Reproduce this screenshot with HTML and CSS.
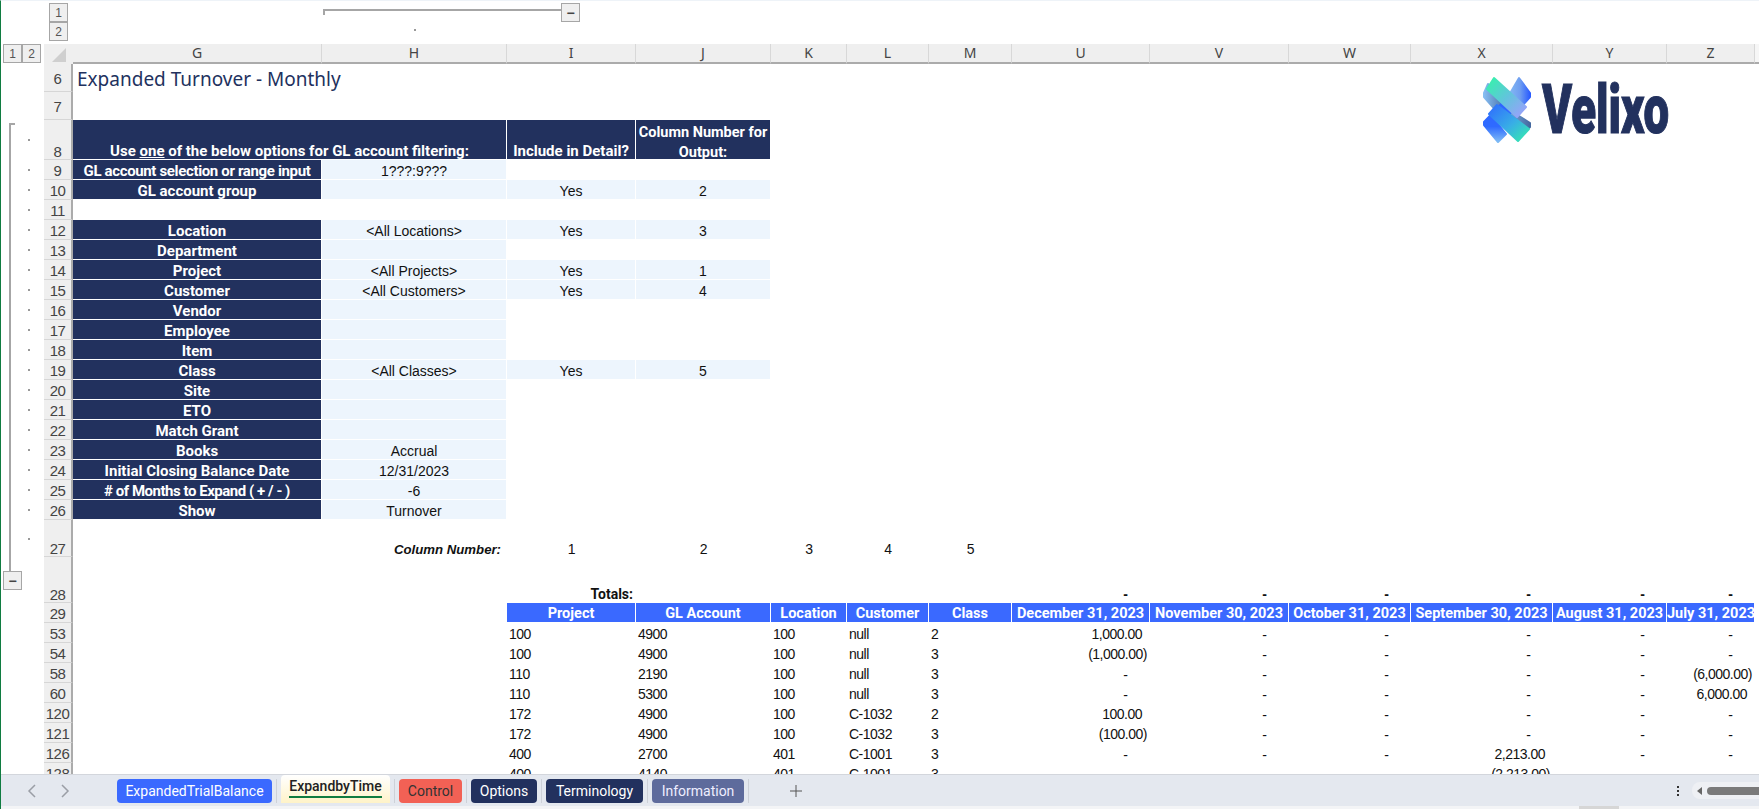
FILE: index.html
```html
<!DOCTYPE html>
<html lang="en">
<head>
<meta charset="utf-8">
<title>Expanded Turnover - Monthly</title>
<link rel="stylesheet" href="styles.css">
</head>
<body>
<div class="app">
  <main class="sheet">
    <div class="logo">
      <svg class="logo-mark" viewBox="0 0 48 67" width="48" height="67" aria-hidden="true">
        <defs>
          <linearGradient id="lg-a" x1="0" y1="0" x2="1" y2="1"><stop offset="0" stop-color="#33f5a8"/><stop offset=".5" stop-color="#62c4dc"/><stop offset="1" stop-color="#a09cff"/></linearGradient>
          <linearGradient id="lg-b" x1="0" y1="0" x2="1" y2="1"><stop offset="0" stop-color="#2f6bff"/><stop offset=".55" stop-color="#38aee6"/><stop offset="1" stop-color="#35eeaa"/></linearGradient>
          <linearGradient id="lg-c" x1="0" y1="0" x2="1" y2="0"><stop offset="0" stop-color="#8cc4f5"/><stop offset=".6" stop-color="#6f9ef0"/><stop offset="1" stop-color="#2a5cff"/></linearGradient>
          <linearGradient id="lg-d" x1="0" y1="0" x2="1" y2="0"><stop offset="0" stop-color="#86bdf2"/><stop offset="1" stop-color="#44689f"/></linearGradient>
          <linearGradient id="lg-e" x1="0" y1="0" x2="0" y2="1"><stop offset="0" stop-color="#2f63ff"/><stop offset=".65" stop-color="#2f6bff"/><stop offset="1" stop-color="#7fbcf5"/></linearGradient>
        </defs>
        <path d="M36 2 L47 17 L47 21 L32 38 L22 26 Z" fill="url(#lg-c)" stroke="url(#lg-c)" stroke-width="2" stroke-linejoin="round"/>
        <path d="M5 8 L1 17 L1 21 L16 38 L24 30 Z" fill="url(#lg-d)" stroke="url(#lg-d)" stroke-width="2" stroke-linejoin="round"/>
        <path d="M28 35 L47 47 L47 51 L36 62 L20 44 Z" fill="url(#lg-d)" stroke="url(#lg-d)" stroke-width="2" stroke-linejoin="round"/>
        <path d="M1 46 L24 22 L33 32 L15 48 L23 58 L15 66 L1 49 Z" fill="url(#lg-e)" stroke="url(#lg-e)" stroke-width="2" stroke-linejoin="round"/>
        <path d="M14 29 L46 53 L35 65 L6 38 Z" fill="url(#lg-b)" stroke="url(#lg-b)" stroke-width="2" stroke-linejoin="round"/>
        <path d="M11 2 L43 31 L34 41 L4 13 Z" fill="url(#lg-a)" stroke="url(#lg-a)" stroke-width="2" stroke-linejoin="round"/>
      </svg>
      <span class="logo-word">Velixo</span>
    </div>
    <table class="grid">
      <colgroup>
        <col class="c-gutter"><col class="c-rh"><col class="c-g"><col class="c-h"><col class="c-i"><col class="c-j"><col class="c-k"><col class="c-l"><col class="c-m"><col class="c-u"><col class="c-v"><col class="c-w"><col class="c-x"><col class="c-y"><col class="c-z"><col class="c-end">
      </colgroup>
      <tr class="r-outline">
        <td colspan="2" class="levels-cell"><div class="col-levels"><button class="lvl">1</button><button class="lvl">2</button></div></td>
        <td></td>
        <td colspan="3" class="outline-cell">
          <div class="outline-top"><span class="outline-line"></span><button class="lvl minus">&minus;</button></div>
          <div class="outline-dotrow"><span class="odot"></span></div>
        </td>
        <td colspan="10"></td>
      </tr>
      <tr class="r-head">
        <td class="lv2"><div class="row-levels"><button class="lvl">1</button><button class="lvl">2</button></div></td>
        <td class="corner"><span class="tri"></span></td>
        <td class="ch">G</td><td class="ch">H</td><td class="ch">I</td><td class="ch">J</td><td class="ch">K</td><td class="ch">L</td><td class="ch">M</td><td class="ch">U</td><td class="ch">V</td><td class="ch">W</td><td class="ch">X</td><td class="ch">Y</td><td class="ch">Z</td><td class="ch-end"></td>
      </tr>
      <tr class="r28"><td></td><td class="rh">6</td><td colspan="4" class="title">Expanded Turnover - Monthly</td><td colspan="10"></td></tr>
      <tr class="r28"><td></td><td class="rh">7</td><td colspan="14"></td></tr>
      <tr class="r40"><td class="gt gt-first"></td><td class="rh bt">8</td><td colspan="2" class="nv bt">Use <u>one</u> of the below options for GL account filtering:</td><td class="nv bt">Include in Detail?</td><td class="nv bt wrap"><span class="wrap-text">Column Number for Output:</span></td><td colspan="10"></td></tr>
      <tr class="r20"><td class="gt"></td><td class="rh">9</td><td class="nv tight">GL account selection or range input</td><td class="lt">1???:9???</td><td colspan="12"></td></tr>
      <tr class="r20"><td class="gt"></td><td class="rh">10</td><td class="nv">GL account group</td><td class="lt"></td><td class="lt">Yes</td><td class="lt">2</td><td colspan="10"></td></tr>
      <tr class="r20"><td class="gt"></td><td class="rh">11</td><td colspan="14"></td></tr>
      <tr class="r20"><td class="gt"></td><td class="rh">12</td><td class="nv">Location</td><td class="lt">&lt;All Locations&gt;</td><td class="lt">Yes</td><td class="lt">3</td><td colspan="10"></td></tr>
      <tr class="r20"><td class="gt"></td><td class="rh">13</td><td class="nv">Department</td><td class="lt"></td><td colspan="12"></td></tr>
      <tr class="r20"><td class="gt"></td><td class="rh">14</td><td class="nv">Project</td><td class="lt">&lt;All Projects&gt;</td><td class="lt">Yes</td><td class="lt">1</td><td colspan="10"></td></tr>
      <tr class="r20"><td class="gt"></td><td class="rh">15</td><td class="nv">Customer</td><td class="lt">&lt;All Customers&gt;</td><td class="lt">Yes</td><td class="lt">4</td><td colspan="10"></td></tr>
      <tr class="r20"><td class="gt"></td><td class="rh">16</td><td class="nv">Vendor</td><td class="lt"></td><td colspan="12"></td></tr>
      <tr class="r20"><td class="gt"></td><td class="rh">17</td><td class="nv">Employee</td><td class="lt"></td><td colspan="12"></td></tr>
      <tr class="r20"><td class="gt"></td><td class="rh">18</td><td class="nv">Item</td><td class="lt"></td><td colspan="12"></td></tr>
      <tr class="r20"><td class="gt"></td><td class="rh">19</td><td class="nv">Class</td><td class="lt">&lt;All Classes&gt;</td><td class="lt">Yes</td><td class="lt">5</td><td colspan="10"></td></tr>
      <tr class="r20"><td class="gt"></td><td class="rh">20</td><td class="nv">Site</td><td class="lt"></td><td colspan="12"></td></tr>
      <tr class="r20"><td class="gt"></td><td class="rh">21</td><td class="nv">ETO</td><td class="lt"></td><td colspan="12"></td></tr>
      <tr class="r20"><td class="gt"></td><td class="rh">22</td><td class="nv">Match Grant</td><td class="lt"></td><td colspan="12"></td></tr>
      <tr class="r20"><td class="gt"></td><td class="rh">23</td><td class="nv">Books</td><td class="lt">Accrual</td><td colspan="12"></td></tr>
      <tr class="r20"><td class="gt"></td><td class="rh">24</td><td class="nv">Initial Closing Balance Date</td><td class="lt">12/31/2023</td><td colspan="12"></td></tr>
      <tr class="r20"><td class="gt"></td><td class="rh">25</td><td class="nv tighter"># of Months to Expand ( + / - )</td><td class="lt">-6</td><td colspan="12"></td></tr>
      <tr class="r20"><td class="gt"></td><td class="rh">26</td><td class="nv">Show</td><td class="lt">Turnover</td><td colspan="12"></td></tr>
      <tr class="r37"><td class="gt"></td><td class="rh bt">27</td><td></td><td class="colnum">Column Number:</td><td class="mid">1</td><td class="mid">2</td><td class="mid">3</td><td class="mid">4</td><td class="mid">5</td><td colspan="7"></td></tr>
      <tr class="r46"><td class="gt-last"><button class="lvl minus group-minus">&minus;</button></td><td class="rh bt">28</td><td colspan="2"></td><td class="totals">Totals:</td><td colspan="4"></td><td class="d b">-</td><td class="d b">-</td><td class="d b">-</td><td class="d b">-</td><td class="d b">-</td><td class="d b">-</td><td></td></tr>
      <tr class="r20"><td></td><td class="rh">29</td><td colspan="2"></td><td class="bl">Project</td><td class="bl">GL Account</td><td class="bl">Location</td><td class="bl">Customer</td><td class="bl">Class</td><td class="bl">December 31, 2023</td><td class="bl">November 30, 2023</td><td class="bl">October 31, 2023</td><td class="bl">September 30, 2023</td><td class="bl">August 31, 2023</td><td class="bl">July 31, 2023</td><td></td></tr>
      <tr class="r20"><td></td><td class="rh">53</td><td colspan="2"></td><td class="t">100</td><td class="t">4900</td><td class="t">100</td><td class="t">null</td><td class="t">2</td><td class="n">1,000.00</td><td class="d">-</td><td class="d">-</td><td class="d">-</td><td class="d">-</td><td class="d">-</td><td></td></tr>
      <tr class="r20"><td></td><td class="rh">54</td><td colspan="2"></td><td class="t">100</td><td class="t">4900</td><td class="t">100</td><td class="t">null</td><td class="t">3</td><td class="p">(1,000.00)</td><td class="d">-</td><td class="d">-</td><td class="d">-</td><td class="d">-</td><td class="d">-</td><td></td></tr>
      <tr class="r20"><td></td><td class="rh">58</td><td colspan="2"></td><td class="t">110</td><td class="t">2190</td><td class="t">100</td><td class="t">null</td><td class="t">3</td><td class="d">-</td><td class="d">-</td><td class="d">-</td><td class="d">-</td><td class="d">-</td><td class="p">(6,000.00)</td><td></td></tr>
      <tr class="r20"><td></td><td class="rh">60</td><td colspan="2"></td><td class="t">110</td><td class="t">5300</td><td class="t">100</td><td class="t">null</td><td class="t">3</td><td class="d">-</td><td class="d">-</td><td class="d">-</td><td class="d">-</td><td class="d">-</td><td class="n">6,000.00</td><td></td></tr>
      <tr class="r20"><td></td><td class="rh">120</td><td colspan="2"></td><td class="t">172</td><td class="t">4900</td><td class="t">100</td><td class="t">C-1032</td><td class="t">2</td><td class="n">100.00</td><td class="d">-</td><td class="d">-</td><td class="d">-</td><td class="d">-</td><td class="d">-</td><td></td></tr>
      <tr class="r20"><td></td><td class="rh">121</td><td colspan="2"></td><td class="t">172</td><td class="t">4900</td><td class="t">100</td><td class="t">C-1032</td><td class="t">3</td><td class="p">(100.00)</td><td class="d">-</td><td class="d">-</td><td class="d">-</td><td class="d">-</td><td class="d">-</td><td></td></tr>
      <tr class="r20"><td></td><td class="rh">126</td><td colspan="2"></td><td class="t">400</td><td class="t">2700</td><td class="t">401</td><td class="t">C-1001</td><td class="t">3</td><td class="d">-</td><td class="d">-</td><td class="d">-</td><td class="n">2,213.00</td><td class="d">-</td><td class="d">-</td><td></td></tr>
      <tr class="r20"><td></td><td class="rh">128</td><td colspan="2"></td><td class="t">400</td><td class="t">4140</td><td class="t">401</td><td class="t">C-1001</td><td class="t">3</td><td class="d">-</td><td class="d">-</td><td class="d">-</td><td class="p">(2,213.00)</td><td class="d">-</td><td class="d">-</td><td></td></tr>
    </table>
  </main>
  <footer class="tabbar">
    <nav class="tab-nav">
      <svg viewBox="0 0 10 14" width="10" height="14" aria-hidden="true"><path d="M8 1 L2 7 L8 13" class="chev"/></svg>
      <svg viewBox="0 0 10 14" width="10" height="14" aria-hidden="true"><path d="M2 1 L8 7 L2 13" class="chev"/></svg>
    </nav>
    <div class="tabs">
      <div class="tab tab-blue">ExpandedTrialBalance</div>
      <i class="sep"></i>
      <div class="tab-active"><span class="tab-active-label">ExpandbyTime</span></div>
      <i class="sep"></i>
      <div class="tab tab-red">Control</div>
      <i class="sep"></i>
      <div class="tab tab-navy t-options">Options</div>
      <i class="sep"></i>
      <div class="tab tab-navy t-term">Terminology</div>
      <i class="sep"></i>
      <div class="tab tab-slate">Information</div>
      <i class="sep"></i>
      <svg class="plus" viewBox="0 0 12 12" width="12" height="12" aria-hidden="true"><path d="M6 0 V12 M0 6 H12"/></svg>
    </div>
    <div class="more"><i></i><i></i><i></i></div>
    <div class="hscroll"><span class="harrow"></span><span class="hthumb"></span></div>
  </footer>
  <div class="bottom"><span class="bottom-thumb"></span></div>
</div>
</body>
</html>
```
FILE: styles.css
```css
* { box-sizing: border-box; }
html, body { margin: 0; height: 100%; overflow: hidden; background: #fff; }
.app {
  height: 809px; display: flex; flex-direction: column;
  border-left: 1px solid #107c41; border-top: 1px solid #eef3f8;
  font-family: "Liberation Sans", sans-serif; color: #111;
}
.sheet { position: relative; height: 773px; overflow: hidden; flex: none; }

.grid { border-collapse: separate; border-spacing: 0; table-layout: fixed; width: 1758px; font-size: 14px; }
.grid td { padding: 0; white-space: nowrap; line-height: 16px; overflow: hidden; }
.c-gutter { width: 43px; } .c-rh { width: 29px; } .c-g { width: 249px; } .c-h { width: 185px; }
.c-i { width: 129px; } .c-j { width: 135px; } .c-k { width: 76px; } .c-l { width: 82px; } .c-m { width: 83px; }
.c-u { width: 138px; } .c-v { width: 139px; } .c-w { width: 122px; } .c-x { width: 142px; } .c-y { width: 114px; }
.c-z { width: 88px; } .c-end { width: 4px; }

.r-outline td { height: 43px; vertical-align: top; }
.r-head td { height: 20px; }
.r28 td { height: 28px; }
.r40 td { height: 40px; }
.r20 td { height: 20px; }
.r37 td { height: 37px; }
.r46 td { height: 46px; }

.lvl {
  display: flex; align-items: center; justify-content: center; padding: 0;
  width: 19px; height: 19px; border: 1px solid #a6a6a6; background: #efefef;
  color: #555; font: 12px "Liberation Sans", sans-serif;
}
.minus { font-weight: 700; color: #444; font-size: 14px; }
.col-levels { display: flex; flex-direction: column; padding: 2px 0 0 48px; }
.grid td.levels-cell { overflow: visible; }
.grid td.outline-cell { padding: 2px 0 0 1px; }
.outline-top { display: flex; align-items: flex-start; height: 20px; }
.outline-line { width: 238px; height: 6px; margin-top: 6px; border-top: 2px solid #a6a6a6; border-left: 2px solid #a6a6a6; }
.outline-dotrow { display: flex; justify-content: center; width: 183px; padding-top: 6px; }
.odot { width: 2px; height: 2px; background: #999; }

.lv2 { vertical-align: top; }
.row-levels { display: flex; padding-left: 2px; }
.row-levels .lvl { height: 19px; }
.corner { background: #efefef; border-bottom: 2px solid #efefef; }
.tri {
  display: block; width: 0; height: 0; margin: 4px 0 0 8px;
  border-left: 14px solid transparent; border-bottom: 14px solid #cfcfcf;
}
.ch {
  background: #efefef; border-bottom: 2px solid #ababab; border-right: 1px solid #d8d8d8;
  text-align: center; color: #444; font: 14px "Noto Sans", sans-serif;
}
.ch-end { background: #f6f6f6; border-bottom: 2px solid #ababab; }

.grid td.rh {
  background: #efefef; border-right: 2px solid #ababab; border-bottom: 1px solid #d6d6d6;
  text-align: center; color: #444; font-size: 15px; letter-spacing: -.5px; padding-top: 3px;
}
.grid td.rh.bt { vertical-align: bottom; padding-top: 0; line-height: 15px; }
.grid td.title { color: #22315e; font: 19px "Noto Sans", sans-serif; padding: 2px 0 0 4px; }
.grid td.nv {
  background: #22315e; color: #fff; text-align: center; padding-top: 3px;
  font: 700 15px/16px Roboto, sans-serif;
  border-right: 1px solid #fff; border-bottom: 1px solid #fff;
}
.grid td.nv.bt { vertical-align: bottom; line-height: 16px; padding-top: 0; overflow: visible; }
.grid td.tight { letter-spacing: -.35px; }
.grid td.tighter { letter-spacing: -.47px; }
.grid td.nv.wrap { white-space: normal; font-size: 14.5px; line-height: 20px; }
.wrap-text { display: block; margin-bottom: -4px; }
.grid td.lt {
  background: #edf5fd; text-align: center; color: #111; padding-top: 3px;
  border-right: 1px solid #fff; border-bottom: 1px solid #fff;
}
.grid td.colnum { text-align: right; font-style: italic; font-weight: 700; padding-right: 6px; vertical-align: bottom; font-size: 13.2px; line-height: 15px; }
.grid td.mid { text-align: center; vertical-align: bottom; letter-spacing: -.5px; line-height: 15px; }
.grid td.totals { text-align: right; font-weight: 700; vertical-align: bottom; padding-right: 3px; font-family: Roboto, sans-serif; font-size: 14px; line-height: 17px; }
.grid td.bl {
  background: #3a69ff; color: #fff; text-align: center; padding-top: 3px;
  font: 700 14.5px/16px Roboto, sans-serif; border-right: 1px solid #fff; border-bottom: 1px solid #fff;
}
.grid td.t { padding: 2px 0 0 2px; letter-spacing: -.5px; }
.grid td.n { text-align: right; padding: 2px 8px 0 0; letter-spacing: -.5px; }
.grid td.p { text-align: right; padding: 2px 3px 0 0; letter-spacing: -.5px; }
.grid td.d { text-align: right; padding-right: 22px; padding-top: 3px; }
.grid td.b { vertical-align: bottom; font-weight: 700; padding-top: 0; padding-bottom: 1px; }

.gt, .gt-first, .gt-last { background-repeat: no-repeat; }
.gt {
  background-image: linear-gradient(#a6a6a6, #a6a6a6), linear-gradient(#999, #999);
  background-size: 2px 100%, 2px 2px;
  background-position: 8px 0, 27px center;
}
.gt-first {
  background-image: linear-gradient(#a6a6a6, #a6a6a6), linear-gradient(#a6a6a6, #a6a6a6), linear-gradient(#999, #999);
  background-size: 2px 100%, 6px 2px, 2px 2px;
  background-position: 8px 3px, 8px 3px, 27px center;
}
.gt-last { vertical-align: top; background-image: linear-gradient(#a6a6a6, #a6a6a6); background-size: 2px 14px; background-position: 8px 0; }
.group-minus { margin: 14px 0 0 2px; }

.logo { position: absolute; left: 1482px; top: 75px; display: flex; align-items: center; gap: 11px; }
.logo-mark { flex: none; }
.logo-word {
  display: inline-block; font: 900 69px/67px Roboto, sans-serif; color: #22315e;
  transform: scaleX(.66); transform-origin: left center; -webkit-text-stroke: 1.2px #22315e;
}

.tabbar { height: 32px; flex: none; display: flex; align-items: center; background: #e4e8ef; border-top: 1px solid #d3d6dc; }
.tab-nav { display: flex; width: 116px; gap: 23px; padding-left: 26px; }
.chev { fill: none; stroke: #9a9ea6; stroke-width: 1.5; }
.tabs { display: flex; align-items: center; height: 100%; flex: 1; }
.tab {
  height: 24px; display: flex; align-items: center; justify-content: center; border-radius: 4px;
  font: 14px Roboto, sans-serif; color: #fff;
}
.tab-blue { background: #3a69ff; width: 155px; }
.tab-active {
  width: 109px; height: 28px; align-self: flex-end; margin-bottom: 3px; border-radius: 4px 4px 0 0;
  background: linear-gradient(#fff, #fff3c8); display: flex; justify-content: center; align-items: flex-start; padding-top: 2px;
}
.tab-active-label { font: 500 14px/19px Roboto, sans-serif; color: #222; border-bottom: 2px solid #107c41; width: 93px; text-align: center; white-space: nowrap; }
.tab-red { background: #f26155; color: #333; width: 63px; }
.tab-navy { background: #22315e; }
.t-options { width: 66px; }
.t-term { width: 97px; }
.tab-slate { background: #5e6b9c; color: #eef; width: 92px; }
.sep { width: 1px; height: 24px; background: #cdd1d8; margin: 0 4px; }
.plus { margin-left: 37px; }
.plus path { stroke: #555; stroke-width: 1; fill: none; }
.more { display: flex; flex-direction: column; gap: 2px; margin-right: 13px; }
.more i { width: 2px; height: 2px; background: #333; }
.hscroll {
  width: 67px; height: 17px; background: #eef0f4; border-radius: 8px 0 0 8px;
  display: flex; align-items: center; padding-left: 5px; gap: 5px;
}
.harrow { width: 0; height: 0; border: 4px solid transparent; border-right: 5px solid #666; border-left: 0; }
.hthumb { flex: 1; height: 8px; background: #7a7a7a; border-radius: 4px 0 0 4px; }
.bottom { flex: 1; background: #f3f4f6; display: flex; padding-left: 1578px; }
.bottom-thumb { width: 40px; background: #d6d6d6; }
```
